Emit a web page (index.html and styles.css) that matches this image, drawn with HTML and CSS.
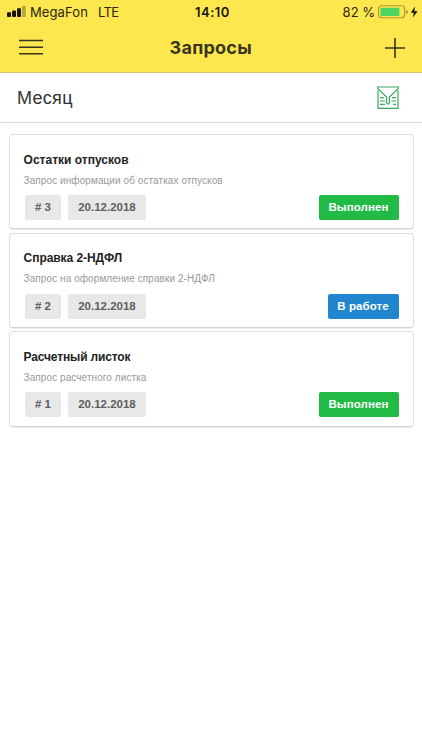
FILE: index.html
```html
<!DOCTYPE html>
<html lang="ru">
<head>
<meta charset="utf-8">
<title>Запросы</title>
<link rel="stylesheet" href="styles.css">
</head>
<body>
<header class="top">
  <div class="status">
    <div class="status-left">
      <svg class="signal" width="19" height="12" viewBox="0 0 19 12"><g fill="#17150a"><rect x="0" y="6.2" width="4" height="4.8" rx="1"/><rect x="5" y="4.4" width="4" height="6.6" rx="1"/><rect x="10" y="2.2" width="4" height="8.8" rx="1"/></g><rect x="15" y="0" width="3.8" height="11" rx="1" fill="#b5a53b"/></svg>
      <span class="carrier">MegaFon</span>
      <span class="network">LTE</span>
    </div>
    <span class="time">14:10</span>
    <div class="status-right">
      <span class="percent">82 %</span>
      <svg class="battery" width="42" height="14" viewBox="0 0 42 14"><rect x=".6" y=".8" width="26" height="12" rx="3" fill="none" stroke="#a99a35" stroke-width="1.1"/><rect x="2.5" y="2.7" width="19" height="8.2" rx="1.2" fill="#4bd562"/><path d="M28 5a2 2 0 0 1 0 4z" fill="#a99a35"/><path d="M37 1.5L32.8 7.7h3L34.9 12.5 39.6 6.2h-3.2z" fill="#17150a"/></svg>
    </div>
  </div>
  <nav class="bar">
    <svg class="menu" width="24" height="16" viewBox="0 0 24 16"><path d="M0 1.5h24M0 8.2h24M0 14.8h24" stroke="#38351d" stroke-width="1.6"/></svg>
    <h1>Запросы</h1>
    <svg class="plus" width="20" height="20" viewBox="0 0 20 20"><path d="M0 10h20M10 0v20" stroke="#38351d" stroke-width="1.6"/></svg>
  </nav>
</header>
<section class="filter">
  <h2>Месяц</h2>
  <svg width="22" height="23" viewBox="0 0 22 23" fill="none" stroke="#3aa862" stroke-width="1.2"><path d="M.6 3V1h20.8v2M1 4.5v17.8h20V4.5M1 3l8.6 8v5.5q0 1.5 1.4 1.5t1.4-1.5V11L21 3M3 11.7h4M3 15h5M3 18.3h5M15 11.7h4M14.5 15H19M16 18.3h3"/></svg>
</section>
<main class="list">
  <article class="card">
    <h3 class="t1">Остатки отпусков</h3>
    <p>Запрос информации об остатках отпусков</p>
    <div class="row"><span class="tag num"># 3</span><span class="tag date">20.12.2018</span><span class="state done">Выполнен</span></div>
  </article>
  <article class="card">
    <h3 class="t2">Справка 2-НДФЛ</h3>
    <p>Запрос на оформление справки 2-НДФЛ</p>
    <div class="row"><span class="tag num"># 2</span><span class="tag date">20.12.2018</span><span class="state work">В работе</span></div>
  </article>
  <article class="card">
    <h3 class="t3">Расчетный листок</h3>
    <p>Запрос расчетного листка</p>
    <div class="row"><span class="tag num"># 1</span><span class="tag date">20.12.2018</span><span class="state done">Выполнен</span></div>
  </article>
</main>
</body>
</html>
```
FILE: styles.css
```css
* { box-sizing: border-box; }
body { margin: 0; height: 750px; overflow: hidden; background: #fff; font-family: "Liberation Sans", sans-serif; color: #222; }
h1, h2, h3, p { margin: 0; }
svg { display: block; flex: none; }
.top { height: 73px; background: #fde74f; border-bottom: 1px solid #d3c773; font-family: Inter, sans-serif; }
.status { display: grid; grid-template-columns: 1fr auto 1fr; align-items: center; height: 24px; padding: 0 4px 0 7px; font-size: 13px; line-height: 24px; color: #29250f; }
.status-left, .status-right { display: flex; align-items: center; }
.status-right { justify-content: flex-end; }
.signal { margin-top: -1px; }
.carrier { margin-left: 4px; width: 58px; letter-spacing: 0.1px; }
.network { margin-left: 10px; letter-spacing: -0.6px; }
.time { font-weight: 600; color: #17150a; letter-spacing: 0.5px; }
.percent { margin-right: 3px; white-space: nowrap; }
.battery { margin-right: -2px; }
.bar { display: grid; grid-template-columns: 1fr auto 1fr; align-items: center; height: 47px; padding: 0 17.5px 0 19px; }
.menu { margin-top: -1px; }
.bar h1 { margin-left: -2px; font-size: 18px; line-height: 22px; font-weight: 700; color: #38351d; letter-spacing: 0.25px; }
.plus { justify-self: end; }
.filter { display: flex; justify-content: space-between; align-items: center; height: 50px; padding: 0 23px 0 17px; border-bottom: 1px solid #d9d9d9; }
.filter h2 { font-size: 18px; font-weight: 400; line-height: 24px; color: #333; letter-spacing: 0.3px; }
.list { display: flex; flex-direction: column; gap: 3.4px; padding: 11px 8.5px 0 9px; }
.card { height: 95.3px; padding: 16.5px 14px 0 13.6px; border: 1px solid #dedfe0; border-bottom-color: #d2d3d4; border-radius: 4px; box-shadow: 0 1px 1px #00000012; }
.card h3 { font-size: 12px; line-height: 16px; font-weight: 700; color: #222; white-space: nowrap; }
.card .t2 { letter-spacing: -0.06px; }
.card .t3 { letter-spacing: -0.15px; }
.card p { margin-top: 6px; font-size: 10px; line-height: 13px; color: #999; white-space: nowrap; letter-spacing: 0.08px; }
.row { display: flex; margin-top: 8.5px; padding-left: 1.4px; }
.tag, .state { height: 25px; line-height: 25px; border-radius: 2px; font-size: 11.5px; font-weight: 700; text-align: center; }
.tag { background: #e8e8e8; color: #5e5e5e; }
.num { width: 36px; }
.date { width: 78px; margin-left: 7px; }
.state { margin-left: auto; color: #fff; letter-spacing: 0.1px; }
.done { width: 80px; background: #21ba45; }
.work { width: 71px; background: #2185d0; }
```
